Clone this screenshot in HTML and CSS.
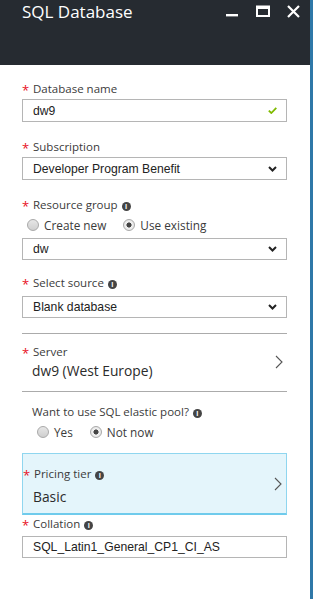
FILE: index.html
```html
<!doctype html>
<html lang="en">
  <head>
    <meta charset="UTF-8" />
    <title>SQL Database</title>
    <link rel="stylesheet" href="styles.css">
  </head>
  <body>
    <div class="blade">
      <div class="blade-header">
        <h1>SQL Database</h1>
        <div class="window-controls">
          <svg class="ctl" width="13" height="13" viewBox="0 0 13 13"><rect x="0" y="9" width="12" height="2.4" fill="#fff"/></svg>
          <svg class="ctl" width="14" height="13" viewBox="0 0 14 13"><rect x="1" y="1.5" width="12" height="9.5" fill="none" stroke="#fff" stroke-width="2"/><rect x="1" y="1" width="12" height="3" fill="#fff"/></svg>
          <svg class="ctl" width="13" height="13" viewBox="0 0 13 13"><path d="M1 1 L12 12 M12 1 L1 12" stroke="#fff" stroke-width="2.2"/></svg>
        </div>
      </div>

      <div class="blade-content">
        <div class="field first">
          <div class="label req">Database name</div>
          <div class="input">
            <span>dw9</span>
            <svg class="check" width="9" height="7" viewBox="0 0 9 7"><path d="M0.8 3.6 L3.3 6 L8.3 0.8" fill="none" stroke="#7fba00" stroke-width="1.8"/></svg>
          </div>
        </div>

        <div class="field">
          <div class="label req">Subscription</div>
          <div class="select">
            <span>Developer Program Benefit</span>
            <svg class="caret" width="9" height="6" viewBox="0 0 9 6"><path d="M1 1 L4.5 4.5 L8 1" fill="none" stroke="#222" stroke-width="2"/></svg>
          </div>
        </div>

        <div class="field">
          <div class="label req">Resource group <i class="info">i</i></div>
          <div class="radios">
            <label class="radio"><span class="dot"></span>Create new</label>
            <label class="radio on"><span class="dot"></span>Use existing</label>
          </div>
          <div class="select short">
            <span>dw</span>
            <svg class="caret" width="9" height="6" viewBox="0 0 9 6"><path d="M1 1 L4.5 4.5 L8 1" fill="none" stroke="#222" stroke-width="2"/></svg>
          </div>
        </div>

        <div class="field source">
          <div class="label req">Select source <i class="info">i</i></div>
          <div class="select short">
            <span>Blank database</span>
            <svg class="caret" width="9" height="6" viewBox="0 0 9 6"><path d="M1 1 L4.5 4.5 L8 1" fill="none" stroke="#222" stroke-width="2"/></svg>
          </div>
        </div>

        <div class="nav-row server">
          <div>
            <div class="label req">Server</div>
            <div class="value">dw9 (West Europe)</div>
          </div>
          <svg class="chevron" width="8" height="14" viewBox="0 0 8 14"><path d="M1 1 L7 7 L1 13" fill="none" stroke="#555" stroke-width="1.1"/></svg>
        </div>

        <div class="pool">
          <div class="label">Want to use SQL elastic pool? <i class="info">i</i></div>
          <div class="radios">
            <label class="radio"><span class="dot"></span>Yes</label>
            <label class="radio on"><span class="dot"></span>Not now</label>
          </div>
        </div>

        <div class="nav-row pricing">
          <div>
            <div class="label req">Pricing tier <i class="info">i</i></div>
            <div class="value">Basic</div>
          </div>
          <svg class="chevron" width="8" height="14" viewBox="0 0 8 14"><path d="M1 1 L7 7 L1 13" fill="none" stroke="#555" stroke-width="1.1"/></svg>
        </div>

        <div class="field collation">
          <div class="label req">Collation <i class="info">i</i></div>
          <div class="input short">
            <span>SQL_Latin1_General_CP1_CI_AS</span>
          </div>
        </div>
      </div>
    </div>
    <div class="edge"></div>
  </body>
</html>
```

FILE: styles.css
```css
* {
  margin: 0;
  padding: 0;
  box-sizing: border-box;
}

body {
  display: flex;
  height: 599px;
  overflow: hidden;
  background: #fff;
  font-family: "Segoe UI", "Open Sans", sans-serif;
  color: #3b3b3b;
}

.blade {
  width: 310px;
  background: #fff;
}

.edge {
  width: 3px;
  background: #2f78a8;
}

.blade-header {
  height: 65px;
  background: #262b31;
  color: #fff;
  display: flex;
  justify-content: space-between;
  padding: 0 10px 0 22px;
}

.blade-header h1 {
  font-size: 17px;
  font-weight: 400;
  line-height: 24px;
}

.window-controls {
  display: flex;
  gap: 17px;
  padding-top: 5px;
}

.blade-content {
  padding: 15px 23px 0 22px;
}

.label {
  position: relative;
  height: 18px;
  line-height: 18px;
  font-size: 11.5px;
  padding-left: 11px;
  color: #3b3b3b;
}

.label.req::before {
  content: "*";
  position: absolute;
  left: 0;
  top: 1px;
  color: #e81123;
  font-size: 13px;
}

.info {
  display: inline-block;
  width: 9px;
  height: 9px;
  border-radius: 50%;
  background: #444;
  color: #fff;
  font-style: normal;
  font-weight: bold;
  font-size: 7px;
  line-height: 9px;
  text-align: center;
  vertical-align: 0;
  margin-left: 1px;
}

.field {
  margin-top: 16px;
}

.field.first {
  margin-top: 0;
}

.input,
.select {
  display: flex;
  align-items: center;
  justify-content: space-between;
  height: 23px;
  margin-top: 1px;
  padding: 0 9px 0 10px;
  border: 1px solid #b5b5b5;
  font-family: "Liberation Sans", Arial, sans-serif;
  font-size: 12.2px;
  color: #222;
}

.input.short,
.select.short {
  height: 22px;
}

.radios {
  display: flex;
  gap: 17px;
  height: 18px;
  margin: 2px 0 4px 5px;
}

.radio {
  display: flex;
  align-items: center;
  gap: 5px;
  font-size: 11.8px;
  color: #3b3b3b;
}

.dot {
  width: 12px;
  height: 12px;
  border-radius: 50%;
  border: 1px solid #a9a9a9;
  background: linear-gradient(#e6e6e6, #cfcfcf);
}

.radio.on .dot {
  background: radial-gradient(circle, #444 0, #444 2.3px, #f2f2f2 2.8px, #dcdcdc 100%);
}

.source {
  margin-top: 14px;
}

.source .select {
  margin-top: 4px;
}

.nav-row {
  display: flex;
  justify-content: space-between;
  align-items: center;
  padding-right: 4px;
}

.nav-row .value {
  font-size: 13.8px;
  line-height: 20px;
  padding-left: 10px;
  color: #2b2b2b;
}

.server {
  margin-top: 15px;
  border-top: 1px solid #ababab;
  border-bottom: 1px solid #ababab;
  padding-top: 9px;
  padding-bottom: 10px;
}

.pool {
  padding: 11px 0 0 10px;
}

.pool .label {
  padding-left: 0;
}

.pool .radios {
  margin-top: 2px;
}

.pricing {
  margin-top: 12px;
  height: 62px;
  background: #e4f5fb;
  border: 1px solid #8fd6ef;
  border-bottom: 2px solid #6fcbec;
}

.pricing .label {
  margin-top: 4px;
}

.pricing .value {
  margin-top: 4px;
}

.collation {
  margin-top: 0;
}

.collation .input {
  margin-top: 3px;
}
```
